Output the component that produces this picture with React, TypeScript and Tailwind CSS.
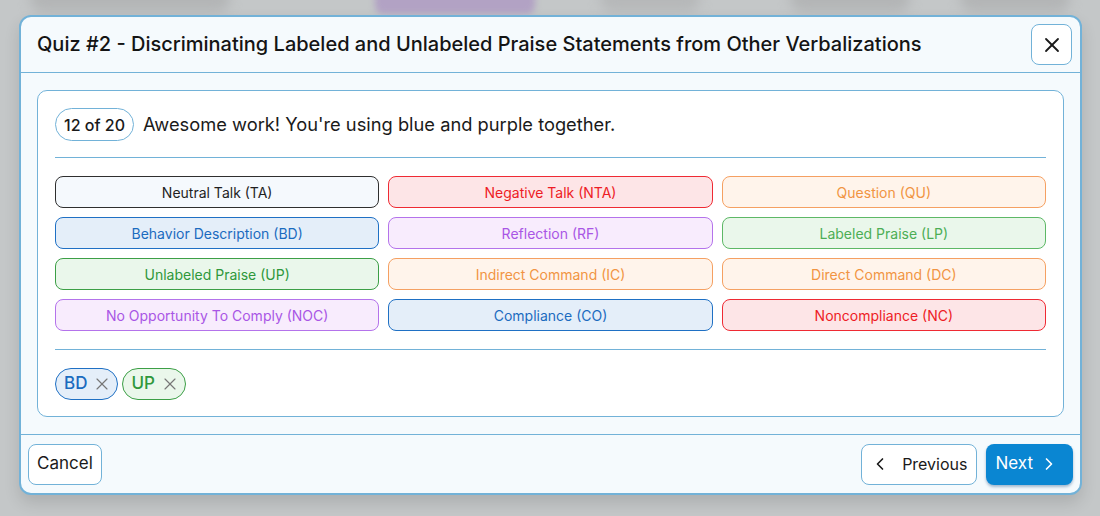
import { X, ChevronLeft, ChevronRight } from 'lucide-react'

const codes = [
  { label: 'Neutral Talk (TA)', cls: 'bg-[#f5f9fd] border-[#2f2f2f] text-[#1f1f1f]' },
  { label: 'Negative Talk (NTA)', cls: 'bg-[#fde5e7] border-[#ef2a33] text-[#ee1c25]' },
  { label: 'Question (QU)', cls: 'bg-[#fff4eb] border-[#f5a062] text-[#f19443]' },
  { label: 'Behavior Description (BD)', cls: 'bg-[#e4eef9] border-[#1f70c4] text-[#1b6bbf]' },
  { label: 'Reflection (RF)', cls: 'bg-[#f8ecfd] border-[#b473eb] text-[#a956e5]' },
  { label: 'Labeled Praise (LP)', cls: 'bg-[#eaf7eb] border-[#5db866] text-[#4cae55]' },
  { label: 'Unlabeled Praise (UP)', cls: 'bg-[#eaf7eb] border-[#3c9f46] text-[#2f983b]' },
  { label: 'Indirect Command (IC)', cls: 'bg-[#fff4eb] border-[#f5a062] text-[#f19443]' },
  { label: 'Direct Command (DC)', cls: 'bg-[#fff4eb] border-[#f5a062] text-[#f19443]' },
  { label: 'No Opportunity To Comply (NOC)', cls: 'bg-[#f8ecfd] border-[#b473eb] text-[#a956e5]' },
  { label: 'Compliance (CO)', cls: 'bg-[#e4eef9] border-[#1f70c4] text-[#1b6bbf]' },
  { label: 'Noncompliance (NC)', cls: 'bg-[#fde5e7] border-[#ef2a33] text-[#ee1c25]' },
]

const selected = [
  { code: 'BD', cls: 'bg-[#e4eef9] border-[#1f70c4] text-[#1b6bbf]' },
  { code: 'UP', cls: 'bg-[#eaf7eb] border-[#3c9f46] text-[#2f983b]' },
]

export default function App() {
  return (
    <div className="relative h-[516px] w-[1100px] overflow-hidden bg-[#c4c7c8]" style={{ fontFamily: 'Inter, "Noto Sans", sans-serif' }}>
      {/* blurred page behind */}
      <div className="absolute left-[30px] top-[-14px] h-[26px] w-[200px] rounded-full bg-[#b3b5b6] blur-[6px]" />
      <div className="absolute left-[375px] top-[-14px] h-[28px] w-[160px] rounded-lg bg-[#b2a2c4] blur-[3px]" />
      <div className="absolute left-[600px] top-[-14px] h-[26px] w-[100px] rounded-full bg-[#b6b8b9] blur-[6px]" />
      <div className="absolute left-[790px] top-[-14px] h-[26px] w-[120px] rounded-full bg-[#b3b5b6] blur-[6px]" />
      <div className="absolute left-[960px] top-[-14px] h-[26px] w-[110px] rounded-full bg-[#b3b5b6] blur-[6px]" />

      <div className="absolute left-[19px] top-[15px] flex h-[480px] w-[1063px] flex-col overflow-hidden rounded-[12px] border-2 border-[#72b2d8] bg-[#f5fafd] shadow-[0_8px_16px_rgba(0,0,0,0.12)]">
        {/* header */}
        <div className="flex h-[56px] shrink-0 items-center justify-between border-b border-[#72b2d8] pb-[2px] pl-[16px] pr-[8px]">
          <h1 className="text-[20px] font-medium text-[#141414]">
            Quiz #2 - Discriminating Labeled and Unlabeled Praise Statements from Other Verbalizations
          </h1>
          <button className="mt-[2px] flex h-[41px] w-[41px] items-center justify-center rounded-[8px] border border-[#72b2d8] bg-white text-[#1a1a1a]">
            <X size={24} strokeWidth={1.8} />
          </button>
        </div>

        {/* body */}
        <div className="flex-1 px-[16px] pt-[17px]">
          <div className="rounded-[10px] border border-[#72b2d8] bg-white px-[17px] pb-[16px] pt-[17px]">
            <div className="flex items-center gap-[9px]">
              <span className="flex h-[33px] items-center rounded-full border border-[#72b2d8] px-[8px] text-[16px] font-medium text-[#1a1a1a]">
                12 of 20
              </span>
              <span className="text-[18.3px] text-[#1a1a1a]">Awesome work! You're using blue and purple together.</span>
            </div>
            <div className="mt-[16px] h-px bg-[#72b2d8]" />
            <div className="mt-[18px] grid grid-cols-3 gap-x-[9px] gap-y-[9px]">
              {codes.map(c => (
                <button key={c.label} className={`flex h-[32px] items-center justify-center rounded-[8px] border text-[14px] ${c.cls}`}>
                  {c.label}
                </button>
              ))}
            </div>
            <div className="mt-[18px] h-px bg-[#72b2d8]" />
            <div className="mt-[18px] flex gap-[4px]">
              {selected.map(s => (
                <span key={s.code} className={`flex h-[32px] items-center gap-[5px] rounded-full border pl-[8px] pr-[5px] text-[17px] font-medium ${s.cls}`}>
                  {s.code}
                  <X size={20} strokeWidth={1.4} className="text-[#777777]" />
                </span>
              ))}
            </div>
          </div>
        </div>

        {/* footer */}
        <div className="flex h-[59px] shrink-0 items-center justify-between border-t border-[#72b2d8] px-[7px]">
          <button className="flex h-[41px] items-center rounded-[8px] border border-[#72b2d8] bg-white px-[8px] text-[17px] text-[#1a1a1a]">
            Cancel
          </button>
          <div className="flex gap-[9px]">
            <button className="flex h-[41px] items-center gap-[12px] rounded-[8px] border border-[#72b2d8] bg-white pl-[8px] pr-[9px] text-[16px] text-[#1a1a1a]">
              <ChevronLeft size={20} strokeWidth={2} />
              Previous
            </button>
            <button className="flex h-[41px] items-center gap-[6px] rounded-[8px] bg-[#0a86d2] pl-[9px] pr-[14px] text-[17px] text-white shadow-[0_2px_3px_rgba(0,60,120,0.35)]">
              Next
              <ChevronRight size={20} strokeWidth={2} />
            </button>
          </div>
        </div>
      </div>
    </div>
  )
}
